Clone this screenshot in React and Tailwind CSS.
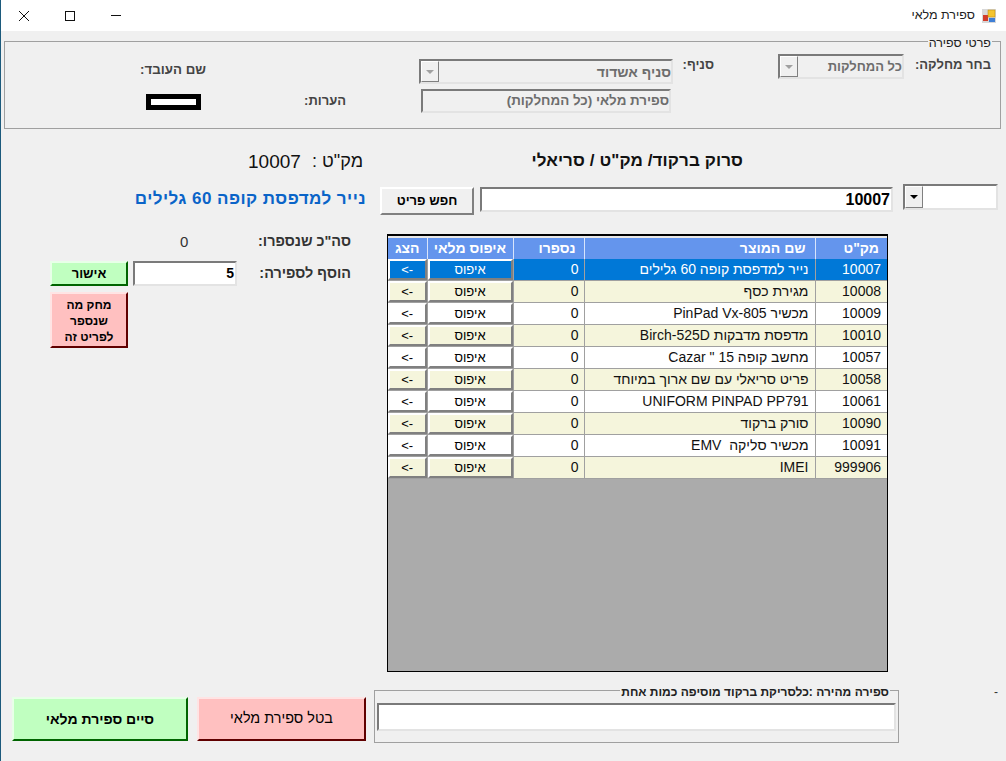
import React from 'react';

const rows = [
  ['10007', 'נייר למדפסת קופה 60 גלילים'],
  ['10008', 'מגירת כסף'],
  ['10009', 'מכשיר PinPad Vx-805'],
  ['10010', 'מדפסת מדבקות Birch-525D'],
  ['10057', 'מחשב קופה 15 " Cazar'],
  ['10058', 'פריט סריאלי עם שם ארוך במיוחד'],
  ['10061', 'UNIFORM PINPAD PP791'],
  ['10090', 'סורק ברקוד'],
  ['10091', 'מכשיר סליקה  EMV'],
  ['999906', 'IMEI'],
];

const sunken = 'border-2 border-t-[#7a7a7a] border-l-[#7a7a7a] border-r-[#e3e3e3] border-b-[#e3e3e3]';

function Arrow({ disabled }) {
  return (
    <div className="w-[18px] h-full shrink-0 flex items-center justify-center bg-[#f0f0f0] border border-t-white border-l-white border-r-[#808080] border-b-[#808080]">
      <div className={`w-0 h-0 border-l-[4px] border-r-[4px] border-t-[4px] border-l-transparent border-r-transparent ${disabled ? 'border-t-[#a0a0a0]' : 'border-t-black'}`} />
    </div>
  );
}

function Combo({ className, textClass, text }) {
  return (
    <div className={`${sunken} flex ${className}`}>
      <Arrow disabled />
      <div dir="rtl" className={`flex-1 flex items-center font-bold text-[#6d6d6d] leading-none ${textClass}`}>{text}</div>
    </div>
  );
}

function Row({ row, i }) {
  const selected = i === 0;
  const btnColor = selected ? 'bg-[#0078d7] text-white' : i % 2 === 1 ? 'bg-[#f5f5dc] text-black' : 'bg-white text-black';
  const cellBg = selected ? 'bg-[#0078d7] text-white' : i % 2 === 1 ? 'bg-[#f5f5dc] text-[#111]' : 'bg-white text-[#111]';
  const btn = `w-full h-full flex items-center justify-center border-2 border-t-white border-l-white border-r-[#808080] border-b-[#808080] text-[13px] ${btnColor}`;
  return (
    <tr className="h-[21px]">
      <td className="p-0 bg-[#a0a0a0] border-b border-[#a0a0a0]">
        <div className="h-[21px]"><div className={btn}>{'<-'}</div></div>
      </td>
      <td className="p-0 bg-[#a0a0a0] border-x border-b border-[#a0a0a0]">
        <div className="h-[21px]"><div dir="rtl" className={btn}>איפוס</div></div>
      </td>
      <td className={`p-0 pr-[5px] text-right text-[14px] border-b border-[#a0a0a0] ${cellBg}`}>0</td>
      <td dir="rtl" className={`p-0 pr-[6px] text-right text-[14px] whitespace-pre border-x border-b border-[#a0a0a0] ${cellBg}`}>{row[1]}</td>
      <td className={`p-0 pr-[6px] text-right text-[14px] border-b border-[#a0a0a0] ${cellBg}`}>{row[0]}</td>
    </tr>
  );
}

export default function App() {
  return (
    <div className="w-[1006px] h-[761px] bg-[#f0f0f0] border-l border-[#1c5a7c] overflow-hidden flex flex-col text-black font-['Liberation_Sans',Arial,sans-serif]">
      {/* title bar */}
      <div className="h-[31px] shrink-0 bg-white flex items-center">
        <div className="w-[46px] flex justify-center">
          <svg width="12" height="12" viewBox="0 0 12 12" fill="none" stroke="#111" strokeWidth="1"><path d="M1 1l10 10M11 1L1 11" /></svg>
        </div>
        <div className="w-[46px] flex justify-center">
          <div className="w-[10px] h-[10px] border border-[#111]" />
        </div>
        <div className="w-[46px] flex justify-center">
          <div className="w-[10px] h-[1px] bg-[#111]" />
        </div>
        <div dir="rtl" className="flex-1 text-right text-[12.5px] text-[#222]">ספירת מלאי</div>
        <svg className="ml-[7px] mr-[10px]" width="14" height="14" viewBox="0 0 14 14">
          <rect x="0" y="0" width="14" height="14" fill="#d8d8d8" />
          <rect x="1" y="6" width="5" height="6" fill="#d23c2a" />
          <rect x="6" y="1" width="7" height="7" fill="#f4c430" stroke="#b8860b" strokeWidth="0.5" />
          <rect x="7" y="9" width="6" height="4" fill="#3f7fd6" />
        </svg>
      </div>

      {/* details group */}
      <div className="relative ml-[3px] mt-[10px] w-[997px] h-[88px] shrink-0 border border-[#a0a0a0] flex items-start">
        <div dir="rtl" className="absolute right-[8px] -top-[6px] bg-[#f0f0f0] px-[1px] text-[12.5px] leading-[14px] text-[#222] whitespace-nowrap">פרטי ספירה</div>
        <div className="ml-[134px] mt-[20px] w-[68px] flex flex-col items-center">
          <div dir="rtl" className="text-[13.3px] font-bold leading-[15px] text-[#444] whitespace-nowrap">שם העובד:</div>
          <div className="mt-[17px] w-[55px] h-[16px] bg-white border-[5px] border-black" />
        </div>
        <div dir="rtl" className="ml-[96px] mt-[51px] w-[43px] text-[13px] font-bold leading-[15px] text-[#444] whitespace-nowrap">הערות:</div>
        <div className="ml-[73px] mt-[17px] w-[254px] flex flex-col gap-[5px]">
          <Combo className="w-[254px] h-[25px]" textClass="text-[14px]" text="סניף אשדוד" />
          <div dir="rtl" className={`${sunken} w-[250px] h-[24px] ml-[2px] flex items-center text-[13.4px] font-bold text-[#6d6d6d] whitespace-nowrap`}>ספירת מלאי (כל המחלקות)</div>
        </div>
        <div dir="rtl" className="ml-[9px] mt-[15px] w-[32px] text-[13px] font-bold leading-[15px] text-[#444] whitespace-nowrap">סניף:</div>
        <Combo className="ml-[64px] mt-[12px] w-[126px] h-[25px]" textClass="text-[13px]" text="כל המחלקות" />
        <div dir="rtl" className="ml-[10px] mt-[15px] w-[77px] text-[13px] font-bold leading-[15px] text-[#444] whitespace-nowrap">בחר מחלקה:</div>
      </div>

      {/* scan heading */}
      <div className="mt-[20px] h-[24px] shrink-0 flex items-center">
        <div className="ml-[247px] w-[53px] text-[19px] leading-none text-[#111]">10007</div>
        <div dir="rtl" className="ml-[13px] w-[49px] text-[18px] leading-none text-[#111] whitespace-pre">מק"ט :</div>
        <div dir="rtl" className="ml-[169px] w-[211px] text-[17px] font-bold tracking-[0.1px] text-[#111] whitespace-nowrap">סרוק ברקוד/ מק"ט / סריאלי</div>
      </div>

      {/* search row */}
      <div className="mt-[11px] h-[30px] shrink-0 flex items-start">
        <div dir="rtl" className="ml-[134px] mt-[5px] w-[231px] text-[17px] font-bold leading-[20px] text-[#0a64c8] tracking-[0.45px] whitespace-nowrap">נייר למדפסת קופה 60 גלילים</div>
        <button dir="rtl" className="ml-[14px] mt-[3px] w-[94px] h-[28px] bg-[#f0f0f0] border-2 border-t-white border-l-white border-r-[#808080] border-b-[#808080] text-[13px] font-bold">חפש פריט</button>
        <div className={`${sunken} ml-[6px] mt-[3px] w-[413px] h-[25px] bg-white text-right pr-[1px] text-[16px] font-bold leading-[21px]`}>10007</div>
        <div className={`${sunken} ml-[10px] w-[95px] h-[26px] bg-white flex`}>
          <Arrow />
        </div>
      </div>

      {/* left controls + table */}
      <div className="mt-[20px] flex items-start">
        <div className="ml-[49px] w-[301px] shrink-0">
          <div className="h-[27px] flex items-start">
            <div className="ml-[130px] w-[10px] text-[15px] leading-[15px] text-[#333]">0</div>
            <div dir="rtl" className="ml-[70px] w-[91px] text-[14.4px] leading-[15px] font-bold text-[#333] whitespace-nowrap">סה"כ שנספרו:</div>
          </div>
          <div className="flex items-center">
            <button dir="rtl" className="w-[78px] h-[25px] bg-[#c0ffc0] border-2 border-t-[#e8ffe8] border-l-[#e8ffe8] border-r-[#006400] border-b-[#006400] text-[13px] font-bold">אישור</button>
            <div className={`${sunken} ml-[5px] w-[104px] h-[25px] bg-white text-right pr-[1px] text-[14px] font-bold leading-[21px]`}>5</div>
            <div dir="rtl" className="ml-[22px] w-[92px] text-[14.4px] font-bold text-[#333] whitespace-nowrap">הוסף לספירה:</div>
          </div>
          <button dir="rtl" className="mt-[6px] w-[78px] h-[56px] pt-[2px] bg-[#ffc0c0] border-2 border-t-[#ffe4e4] border-l-[#ffe4e4] border-r-[#600000] border-b-[#600000] text-[12px] font-bold leading-[16px]">מחק מה שנספר לפריט זה</button>
        </div>

        <div className="ml-[36px] w-[501px] h-[438px] bg-[#ababab] border border-black border-t-2 shrink-0">
          <table className="w-[499px] table-fixed border-collapse">
            <colgroup>
              <col className="w-[39px]" />
              <col className="w-[86px]" />
              <col className="w-[71px]" />
              <col className="w-[231px]" />
              <col className="w-[72px]" />
            </colgroup>
            <thead>
              <tr className="h-[21px] bg-[#6495ed] text-white text-[14px] border-t-2 border-[#e8e8e8]">
                <th dir="rtl" className="p-0 font-bold border-r border-[#d8e4fb] text-center">הצג</th>
                <th dir="rtl" className="p-0 font-bold border-r border-[#d8e4fb] text-center">איפוס מלאי</th>
                <th dir="rtl" className="p-0 pr-[8px] font-bold border-r border-[#d8e4fb] text-right">נספרו</th>
                <th dir="rtl" className="p-0 pr-[9px] font-bold border-r border-[#d8e4fb] text-right">שם המוצר</th>
                <th dir="rtl" className="p-0 pr-[8px] font-bold text-right">מק"ט</th>
              </tr>
            </thead>
            <tbody>
              {rows.map((row, i) => (
                <Row key={row[0]} row={row} i={i} />
              ))}
            </tbody>
          </table>
        </div>
      </div>

      {/* footer */}
      <div className="mt-[18px] flex items-start">
        <button dir="rtl" className="ml-[11px] mt-[7px] w-[176px] h-[44px] bg-[#c0ffc0] border-2 border-t-[#e8ffe8] border-l-[#e8ffe8] border-r-[#006400] border-b-[#006400] text-[14px] font-bold">סיים ספירת מלאי</button>
        <button dir="rtl" className="ml-[9px] mt-[7px] w-[169px] h-[44px] bg-[#ffc0c0] border-2 border-t-[#ffe4e4] border-l-[#ffe4e4] border-r-[#600000] border-b-[#600000] text-[14.4px]">בטל ספירת מלאי</button>
        <div className="relative ml-[8px] w-[525px] h-[53px] border border-[#a0a0a0] px-[2px] pt-[12px]">
          <div dir="rtl" className="absolute right-[8px] -top-[6px] bg-[#f0f0f0] px-[1px] text-[12px] leading-[14px] font-bold text-[#222] whitespace-nowrap">ספירה מהירה :כלסריקת ברקוד מוסיפה כמות אחת</div>
          <div className={`${sunken} w-full h-[28px] bg-white`} />
        </div>
        <div className="ml-[95px] -mt-[5px] text-[12px] leading-[14px] text-[#333]">-</div>
      </div>
    </div>
  );
}
